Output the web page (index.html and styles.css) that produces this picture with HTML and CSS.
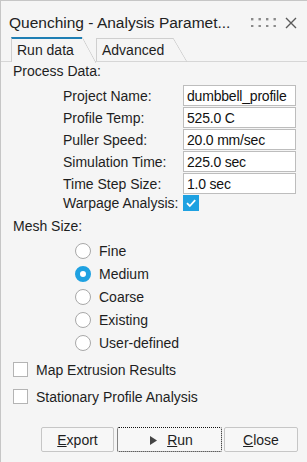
FILE: index.html
```html
<!DOCTYPE html>
<html lang="en">
<head>
    <meta charset="UTF-8">
    <meta name="viewport" content="width=device-width, initial-scale=1.0">
    <title>Quenching - Analysis Parameters</title>
    <link rel="stylesheet" href="styles.css">
</head>

<body>
    <div class="window">
        <div class="titlebar">
            <span class="title">Quenching - Analysis Paramet...</span>
            <svg class="grip" width="26" height="10" viewBox="0 0 26 10">
                <rect x="1" y="1" width="2.4" height="2.4"/><rect x="8.5" y="1" width="2.4" height="2.4"/>
                <rect x="16" y="1" width="2.4" height="2.4"/><rect x="23.5" y="1" width="2.4" height="2.4"/>
                <rect x="1" y="8" width="2.4" height="2.4"/><rect x="8.5" y="8" width="2.4" height="2.4"/>
                <rect x="16" y="8" width="2.4" height="2.4"/><rect x="23.5" y="8" width="2.4" height="2.4"/>
            </svg>
            <svg class="close" width="12" height="12" viewBox="0 0 12 12">
                <path d="M1 1 L11 11 M11 1 L1 11"/>
            </svg>
        </div>

        <div class="tabs">
            <div class="tab active">Run data</div>
            <div class="tab">Advanced</div>
        </div>

        <div class="panel">
            <div class="section">Process Data:</div>
            <div class="fields">
                <label for="project-name">Project Name:</label>
                <input type="text" id="project-name" value="dumbbell_profile">
                <label for="profile-temp">Profile Temp:</label>
                <input type="text" id="profile-temp" value="525.0 C">
                <label for="puller-speed">Puller Speed:</label>
                <input type="text" id="puller-speed" value="20.0 mm/sec">
                <label for="sim-time">Simulation Time:</label>
                <input type="text" id="sim-time" value="225.0 sec">
                <label for="time-step">Time Step Size:</label>
                <input type="text" id="time-step" value="1.0 sec">
                <label>Warpage Analysis:</label>
                <span class="check on">
                    <svg width="16" height="16" viewBox="0 0 16 16"><path d="M4 8.2 L6.8 11 L12.2 5.2"/></svg>
                </span>
            </div>

            <div class="section mesh">Mesh Size:</div>
            <div class="radios">
                <div class="radio-row"><span class="radio"></span>Fine</div>
                <div class="radio-row"><span class="radio on"></span>Medium</div>
                <div class="radio-row"><span class="radio"></span>Coarse</div>
                <div class="radio-row"><span class="radio"></span>Existing</div>
                <div class="radio-row"><span class="radio"></span>User-defined</div>
            </div>

            <div class="checks">
                <div class="check-row"><span class="check"></span>Map Extrusion Results</div>
                <div class="check-row"><span class="check"></span>Stationary Profile Analysis</div>
            </div>

            <div class="buttons">
                <button class="btn export"><u>E</u>xport</button>
                <button class="btn run">
                    <svg class="play" width="7" height="9" viewBox="0 0 7 9"><path d="M0 0 L7 4.5 L0 9 Z"/></svg><u>R</u>un
                </button>
                <button class="btn close-btn"><u>C</u>lose</button>
            </div>
        </div>
    </div>
</body>
</html>
```

FILE: styles.css
```css
body {
    margin: 0;
    font-family: "Liberation Sans", Arial, sans-serif;
    font-size: 14px;
    color: #1e1e1e;
    background-color: #f5f5f5;
}
.window {
    width: 307px;
    height: 462px;
    box-sizing: border-box;
    border-top: 1px solid #c6c6c6;
    border-left: 1px solid #c6c6c6;
    background-color: #f5f5f5;
    overflow: hidden;
}

/* title bar */
.titlebar {
    display: flex;
    align-items: flex-start;
    height: 36px;
    box-sizing: border-box;
    padding: 13px 10px 0 8px;
}
.title {
    font-size: 15.5px;
    line-height: 18px;
    color: #222;
    white-space: nowrap;
}
.grip {
    margin: 3px 0 0 auto;
    fill: #8a8a8a;
}
.close {
    margin: 3px 0 0 9px;
    stroke: #5a5a5a;
    stroke-width: 1.4;
    fill: none;
}

/* tabs */
.tabs {
    display: flex;
    height: 24px;
    padding-left: 10px;
    border-bottom: 1px solid #d6d6d6;
}
.tab {
    position: relative;
    box-sizing: border-box;
    height: 23px;
    margin-top: 1px;
    padding: 3px 0 0 5px;
    line-height: 16px;
    border-left: 1px solid #cfcfcf;
    border-top: 1px solid #cfcfcf;
}
.tab::after {
    content: "";
    position: absolute;
    top: -1px;
    right: -14px;
    width: 14px;
    height: 24px;
    background: linear-gradient(to top right, transparent calc(50% - 0.7px), #cfcfcf 50%, transparent calc(50% + 0.7px));
}
.tab.active {
    width: 71px;
    height: 25px;
    margin: 0 0 -1px 0;
    border-top: 2px solid #1f7fb4;
    background-color: #f5f5f5;
    z-index: 1;
}
.tab.active::after {
    top: -2px;
    height: 26px;
    background: linear-gradient(to top right, #f5f5f5 calc(50% - 0.7px), #cfcfcf 50%, transparent calc(50% + 0.7px));
}
.tab + .tab {
    width: 77px;
    margin-left: 14px;
    padding-left: 5px;
}

/* panel */
.panel {
    padding: 1px 0 0 12px;
}
.section {
    line-height: 16px;
}
.fields {
    display: grid;
    grid-template-columns: 120px 113px;
    row-gap: 1px;
    margin: 6px 0 0 50px;
    align-items: center;
}
.fields label {
    line-height: 16px;
}
.fields input {
    box-sizing: border-box;
    width: 113px;
    height: 21px;
    margin: 0;
    padding: 0 0 0 3px;
    border: 1px solid #bdbdbd;
    border-radius: 0;
    background: white;
    font-family: inherit;
    font-size: 14px;
    letter-spacing: -0.2px;
    color: #111;
    outline: none;
}
.check {
    display: inline-block;
    box-sizing: border-box;
    width: 15px;
    height: 15px;
    border: 1px solid #b4b4b4;
    background: white;
}
.check.on {
    width: 16px;
    height: 16px;
    border: none;
    background-color: #1ea1e1;
}
.check.on svg {
    display: block;
    fill: none;
    stroke: white;
    stroke-width: 1.8;
}
.mesh {
    margin-top: 7px;
}
.radios {
    margin: 5px 0 0 62px;
}
.radio-row {
    display: flex;
    align-items: center;
    height: 23px;
}
.radio {
    box-sizing: border-box;
    width: 16px;
    height: 16px;
    margin-right: 8px;
    border: 1.5px solid #a8a8a8;
    border-radius: 50%;
    background: white;
}
.radio.on {
    border: 5px solid #1ea1e1;
}
.checks {
    margin-top: 2px;
}
.check-row {
    display: flex;
    align-items: center;
    height: 27px;
}
.check-row .check {
    margin-right: 8px;
}

/* buttons */
.buttons {
    display: flex;
    margin: 17px 0 0 28px;
}
.btn {
    box-sizing: border-box;
    height: 25px;
    padding: 0;
    border: 1px solid #c6c6c6;
    border-radius: 2px;
    background-color: #f7f7f7;
    font-family: inherit;
    font-size: 14px;
    color: #1e1e1e;
}
.export {
    width: 73px;
}
.run {
    width: 105px;
    margin-left: 3px;
    padding-left: 4px;
    border: 1px dotted #111;
}
.close-btn {
    width: 74px;
    margin-left: 2px;
}
.play {
    fill: #444;
    margin-right: 10px;
}
```
